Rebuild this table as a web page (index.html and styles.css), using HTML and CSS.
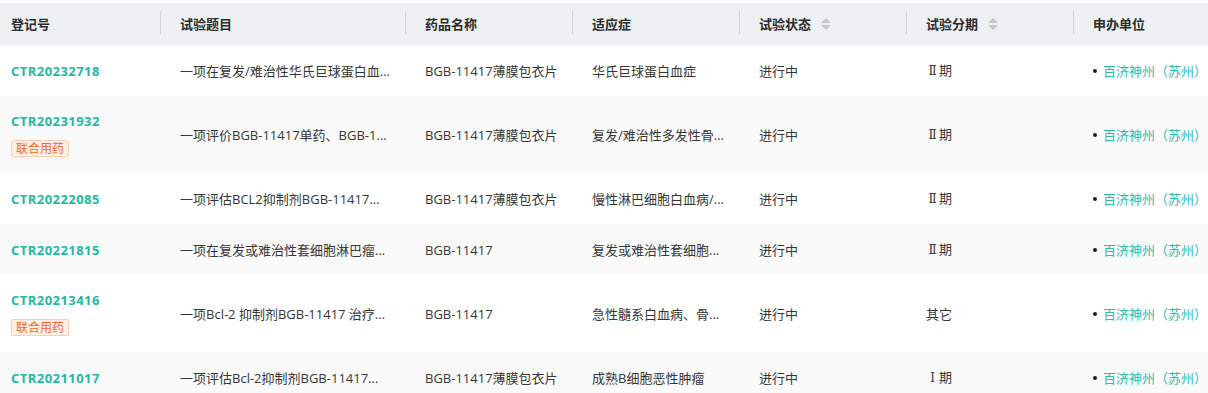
FILE: index.html
```html
<!DOCTYPE html>
<html lang="zh-CN">
<head>
<meta charset="utf-8">
<title>临床试验列表</title>
<link rel="stylesheet" href="styles.css">
</head>
<body>
<div class="wrap">
<table class="trials">
  <colgroup>
    <col class="c1"><col class="c2"><col class="c3"><col class="c4"><col class="c5"><col class="c6"><col class="c7">
  </colgroup>
  <thead>
    <tr>
      <th class="first">登记号</th>
      <th>试验题目</th>
      <th>药品名称</th>
      <th>适应症</th>
      <th><span class="sortable">试验状态<span class="sorter"><i class="up"></i><i class="down"></i></span></span></th>
      <th><span class="sortable">试验分期<span class="sorter"><i class="up"></i><i class="down"></i></span></span></th>
      <th>申办单位</th>
    </tr>
  </thead>
  <tbody>
    <tr>
      <td class="first"><a class="reg">CTR20232718</a></td>
      <td><div class="ell">一项在复发/难治性华氏巨球蛋白血...</div></td>
      <td><div class="ell">BGB-11417薄膜包衣片</div></td>
      <td><div class="ell">华氏巨球蛋白血症</div></td>
      <td>进行中</td>
      <td><span class="roman">Ⅱ</span>期</td>
      <td><div class="sponsor"><span class="dot"></span><a>百济神州（苏州）</a></div></td>
    </tr>
    <tr>
      <td class="first"><a class="reg">CTR20231932</a><div><span class="tag">联合用药</span></div></td>
      <td><div class="ell">一项评价BGB-11417单药、BGB-1...</div></td>
      <td><div class="ell">BGB-11417薄膜包衣片</div></td>
      <td><div class="ell">复发/难治性多发性骨...</div></td>
      <td>进行中</td>
      <td><span class="roman">Ⅱ</span>期</td>
      <td><div class="sponsor"><span class="dot"></span><a>百济神州（苏州）</a></div></td>
    </tr>
    <tr>
      <td class="first"><a class="reg">CTR20222085</a></td>
      <td><div class="ell">一项评估BCL2抑制剂BGB-11417...</div></td>
      <td><div class="ell">BGB-11417薄膜包衣片</div></td>
      <td><div class="ell">慢性淋巴细胞白血病/...</div></td>
      <td>进行中</td>
      <td><span class="roman">Ⅱ</span>期</td>
      <td><div class="sponsor"><span class="dot"></span><a>百济神州（苏州）</a></div></td>
    </tr>
    <tr>
      <td class="first"><a class="reg">CTR20221815</a></td>
      <td><div class="ell">一项在复发或难治性套细胞淋巴瘤...</div></td>
      <td><div class="ell">BGB-11417</div></td>
      <td><div class="ell">复发或难治性套细胞...</div></td>
      <td>进行中</td>
      <td><span class="roman">Ⅱ</span>期</td>
      <td><div class="sponsor"><span class="dot"></span><a>百济神州（苏州）</a></div></td>
    </tr>
    <tr>
      <td class="first"><a class="reg">CTR20213416</a><div><span class="tag">联合用药</span></div></td>
      <td><div class="ell">一项Bcl-2 抑制剂BGB-11417 治疗...</div></td>
      <td><div class="ell">BGB-11417</div></td>
      <td><div class="ell">急性髓系白血病、骨...</div></td>
      <td>进行中</td>
      <td>其它</td>
      <td><div class="sponsor"><span class="dot"></span><a>百济神州（苏州）</a></div></td>
    </tr>
    <tr>
      <td class="first"><a class="reg">CTR20211017</a></td>
      <td><div class="ell">一项评估Bcl-2抑制剂BGB-11417...</div></td>
      <td><div class="ell">BGB-11417薄膜包衣片</div></td>
      <td><div class="ell">成熟B细胞恶性肿瘤</div></td>
      <td>进行中</td>
      <td><span class="roman">Ⅰ</span>期</td>
      <td><div class="sponsor"><span class="dot"></span><a>百济神州（苏州）</a></div></td>
    </tr>
  </tbody>
</table>
</div>
</body>
</html>
```

FILE: styles.css
```css
html, body {
  margin: 0;
  padding: 0;
  background: #ffffff;
}

body {
  font-family: "Open Sans", "Noto Sans CJK SC", sans-serif;
  font-size: 13px;
  color: #363636;
}

.wrap {
  width: 1208px;
  height: 393px;
  overflow: hidden;
  padding-top: 3px;
  box-sizing: border-box;
}

.trials {
  table-layout: fixed;
  border-collapse: collapse;
  border-spacing: 0;
  width: 1300px;
}

.c1 { width: 160px; }
.c2 { width: 245px; }
.c3 { width: 167px; }
.c4 { width: 167px; }
.c5 { width: 167px; }
.c6 { width: 167px; }
.c7 { width: 227px; }

.trials thead th {
  height: 41px;
  padding: 0 10px 0 20px;
  background: #eef1f3;
  border-bottom: 1px solid #e9edef;
  text-align: left;
  font-weight: 600;
  color: #2b2b2b;
  position: relative;
  white-space: nowrap;
}

.trials thead th::before {
  content: "";
  position: absolute;
  left: 0;
  top: 8px;
  height: 23px;
  width: 1px;
  background: #cfd5d8;
}

.trials thead th.first {
  padding-left: 11px;
}

.trials thead th.first::before {
  display: none;
}

.sortable {
  display: inline-flex;
  align-items: center;
}

.sorter {
  display: inline-flex;
  flex-direction: column;
  margin-left: 10px;
  gap: 2px;
}

.sorter i {
  display: block;
  width: 0;
  height: 0;
  border-left: 5px solid transparent;
  border-right: 5px solid transparent;
}

.sorter .up {
  border-bottom: 5px solid #c3c8cc;
}

.sorter .down {
  border-top: 5px solid #c3c8cc;
}

.trials tbody td {
  padding: 16px 10px 15px 20px;
  line-height: 19px;
  vertical-align: middle;
  white-space: nowrap;
}

.trials tbody td.first {
  padding-left: 11px;
}

.trials tbody tr:nth-child(even) td {
  background: #fafafa;
}

.ell {
  overflow: hidden;
  text-overflow: ellipsis;
  white-space: nowrap;
}

.roman {
  font-family: "DejaVu Serif", "Liberation Serif", serif;
  font-size: 12px;
  display: inline-block;
  width: 13px;
  text-align: center;
}

.reg {
  color: #21b9a3;
  font-weight: 700;
  letter-spacing: 0.45px;
}

.tag {
  display: inline-block;
  margin-top: 9px;
  padding: 0 4px;
  height: 15px;
  line-height: 15px;
  font-size: 12px;
  color: #f2661f;
  background: #fff0e7;
  border: 1px solid #fccbb0;
  border-radius: 2px;
}

.sponsor {
  display: flex;
  align-items: center;
  white-space: nowrap;
}

.dot {
  width: 4px;
  height: 4px;
  border-radius: 50%;
  background: #1f1f1f;
  margin-right: 6px;
  flex: none;
}

.sponsor a {
  color: #2bbdaa;
}
```
